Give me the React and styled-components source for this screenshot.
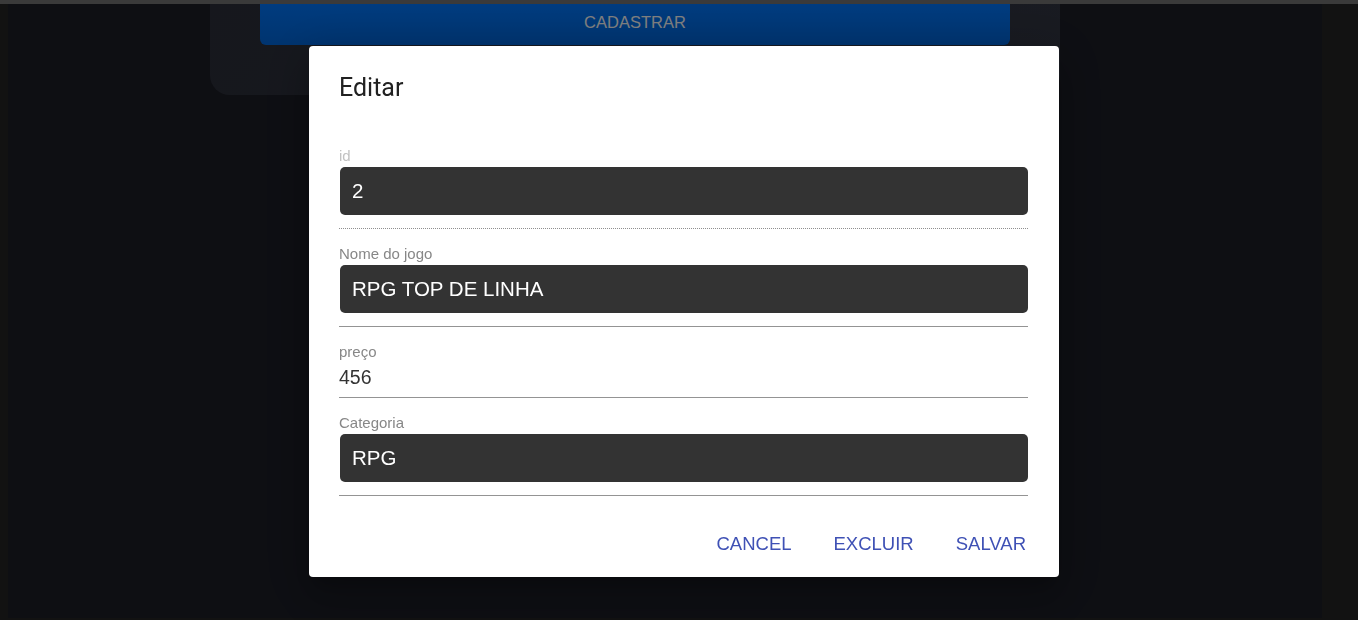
import React from "react";
import styled, { createGlobalStyle } from "styled-components";

const GlobalStyle = createGlobalStyle`
  html, body {
    margin: 0;
    padding: 0;
    background: #242424;
    font-family: "Liberation Sans", Arial, sans-serif;
    overflow: hidden;
  }
`;

const Page = styled.div`
  height: 100vh;
  display: flex;
  flex-direction: column;
`;

const TopBar = styled.div`
  height: 4px;
  background: #747474;
`;

const Main = styled.main`
  flex: 1;
  margin: 0 36px 2px 8px;
  background: #1c1e27;
  display: flex;
  align-items: flex-start;
  padding-left: 202px;
`;

const Card = styled.section`
  width: 750px;
  padding: 0 50px 50px;
  border-radius: 0 0 20px 20px;
  background: linear-gradient(135deg, #2c2f3a, #323643);
`;

const SubmitButton = styled.button`
  width: 100%;
  height: 41px;
  padding: 0 0 4px;
  border: none;
  border-radius: 0 0 6px 6px;
  background: linear-gradient(180deg, #0078ff, #0068de);
  color: #ffffff;
  font-family: "Liberation Sans", Arial, sans-serif;
  font-size: 16.5px;
  text-transform: uppercase;
`;

const Backdrop = styled.div`
  position: fixed;
  inset: 0;
  background: rgba(0, 0, 0, 0.5);
  display: flex;
  align-items: center;
  justify-content: center;
  padding-left: 10px;
  padding-top: 3px;
`;

const Dialog = styled.div`
  width: 750px;
  background: #ffffff;
  border-radius: 4px;
  box-shadow: 0 11px 15px -7px rgba(0, 0, 0, 0.2),
    0 24px 38px 3px rgba(0, 0, 0, 0.14), 0 9px 46px 8px rgba(0, 0, 0, 0.12);
  display: flex;
  flex-direction: column;
`;

const Title = styled.h2`
  margin: 0;
  padding: 23px 30px 0;
  font-family: Roboto, "Liberation Sans", sans-serif;
  font-weight: 400;
  font-size: 25px;
  line-height: 38px;
  color: #212121;
`;

const Content = styled.div`
  padding: 41px 31px 0 30px;
  display: flex;
  flex-direction: column;
  gap: 17px;
`;

const Field = styled.label`
  display: flex;
  flex-direction: column;
`;

const Label = styled.span`
  font-size: 15px;
  line-height: 16px;
  color: ${(p) => (p.disabled ? "#c2c2c2" : "#878787")};
`;

const InputBox = styled.input`
  margin: 3px 0 0 1px;
  height: 48px;
  box-sizing: border-box;
  padding: 0 12px;
  border: none;
  border-radius: 5px;
  background: #333333;
  color: #ffffff;
  font-family: "Liberation Sans", Arial, sans-serif;
  font-size: 20.5px;
  outline: none;
`;

const PlainInput = styled.input`
  margin-top: 3px;
  height: 28px;
  padding: 0;
  border: none;
  background: transparent;
  color: #333333;
  font-family: "Liberation Sans", Arial, sans-serif;
  font-size: 19.5px;
  outline: none;
`;

const Underline = styled.div`
  margin-top: ${(p) => (p.plain ? "6px" : "13px")};
  border-bottom: 1px ${(p) => (p.disabled ? "dotted #8f8f8f" : "solid #949494")};
`;

const Actions = styled.div`
  display: flex;
  justify-content: flex-end;
  gap: 18px;
  padding: 28px 21px 13px;
`;

const TextButton = styled.button`
  height: 40px;
  padding: 0 12px;
  border: none;
  background: transparent;
  color: #3f51b5;
  font-family: "Liberation Sans", Arial, sans-serif;
  font-size: 18.5px;
  text-transform: uppercase;
  cursor: pointer;
`;

const fields = [
  { label: "id", value: "2", disabled: true },
  { label: "Nome do jogo", value: "RPG TOP DE LINHA" },
  { label: "preço", value: "456", plain: true },
  { label: "Categoria", value: "RPG" },
];

const App = () => {
  return (
    <>
      <GlobalStyle />
      <Page>
        <TopBar />
        <Main>
          <Card>
            <SubmitButton>Cadastrar</SubmitButton>
          </Card>
        </Main>
      </Page>
      <Backdrop>
        <Dialog>
          <Title>Editar</Title>
          <Content>
            {fields.map((f) => (
              <Field key={f.label}>
                <Label disabled={f.disabled}>{f.label}</Label>
                {f.plain ? (
                  <PlainInput defaultValue={f.value} />
                ) : (
                  <InputBox defaultValue={f.value} disabled={f.disabled} />
                )}
                <Underline disabled={f.disabled} plain={f.plain} />
              </Field>
            ))}
          </Content>
          <Actions>
            <TextButton>Cancel</TextButton>
            <TextButton>Excluir</TextButton>
            <TextButton>Salvar</TextButton>
          </Actions>
        </Dialog>
      </Backdrop>
    </>
  );
};

export default App;
